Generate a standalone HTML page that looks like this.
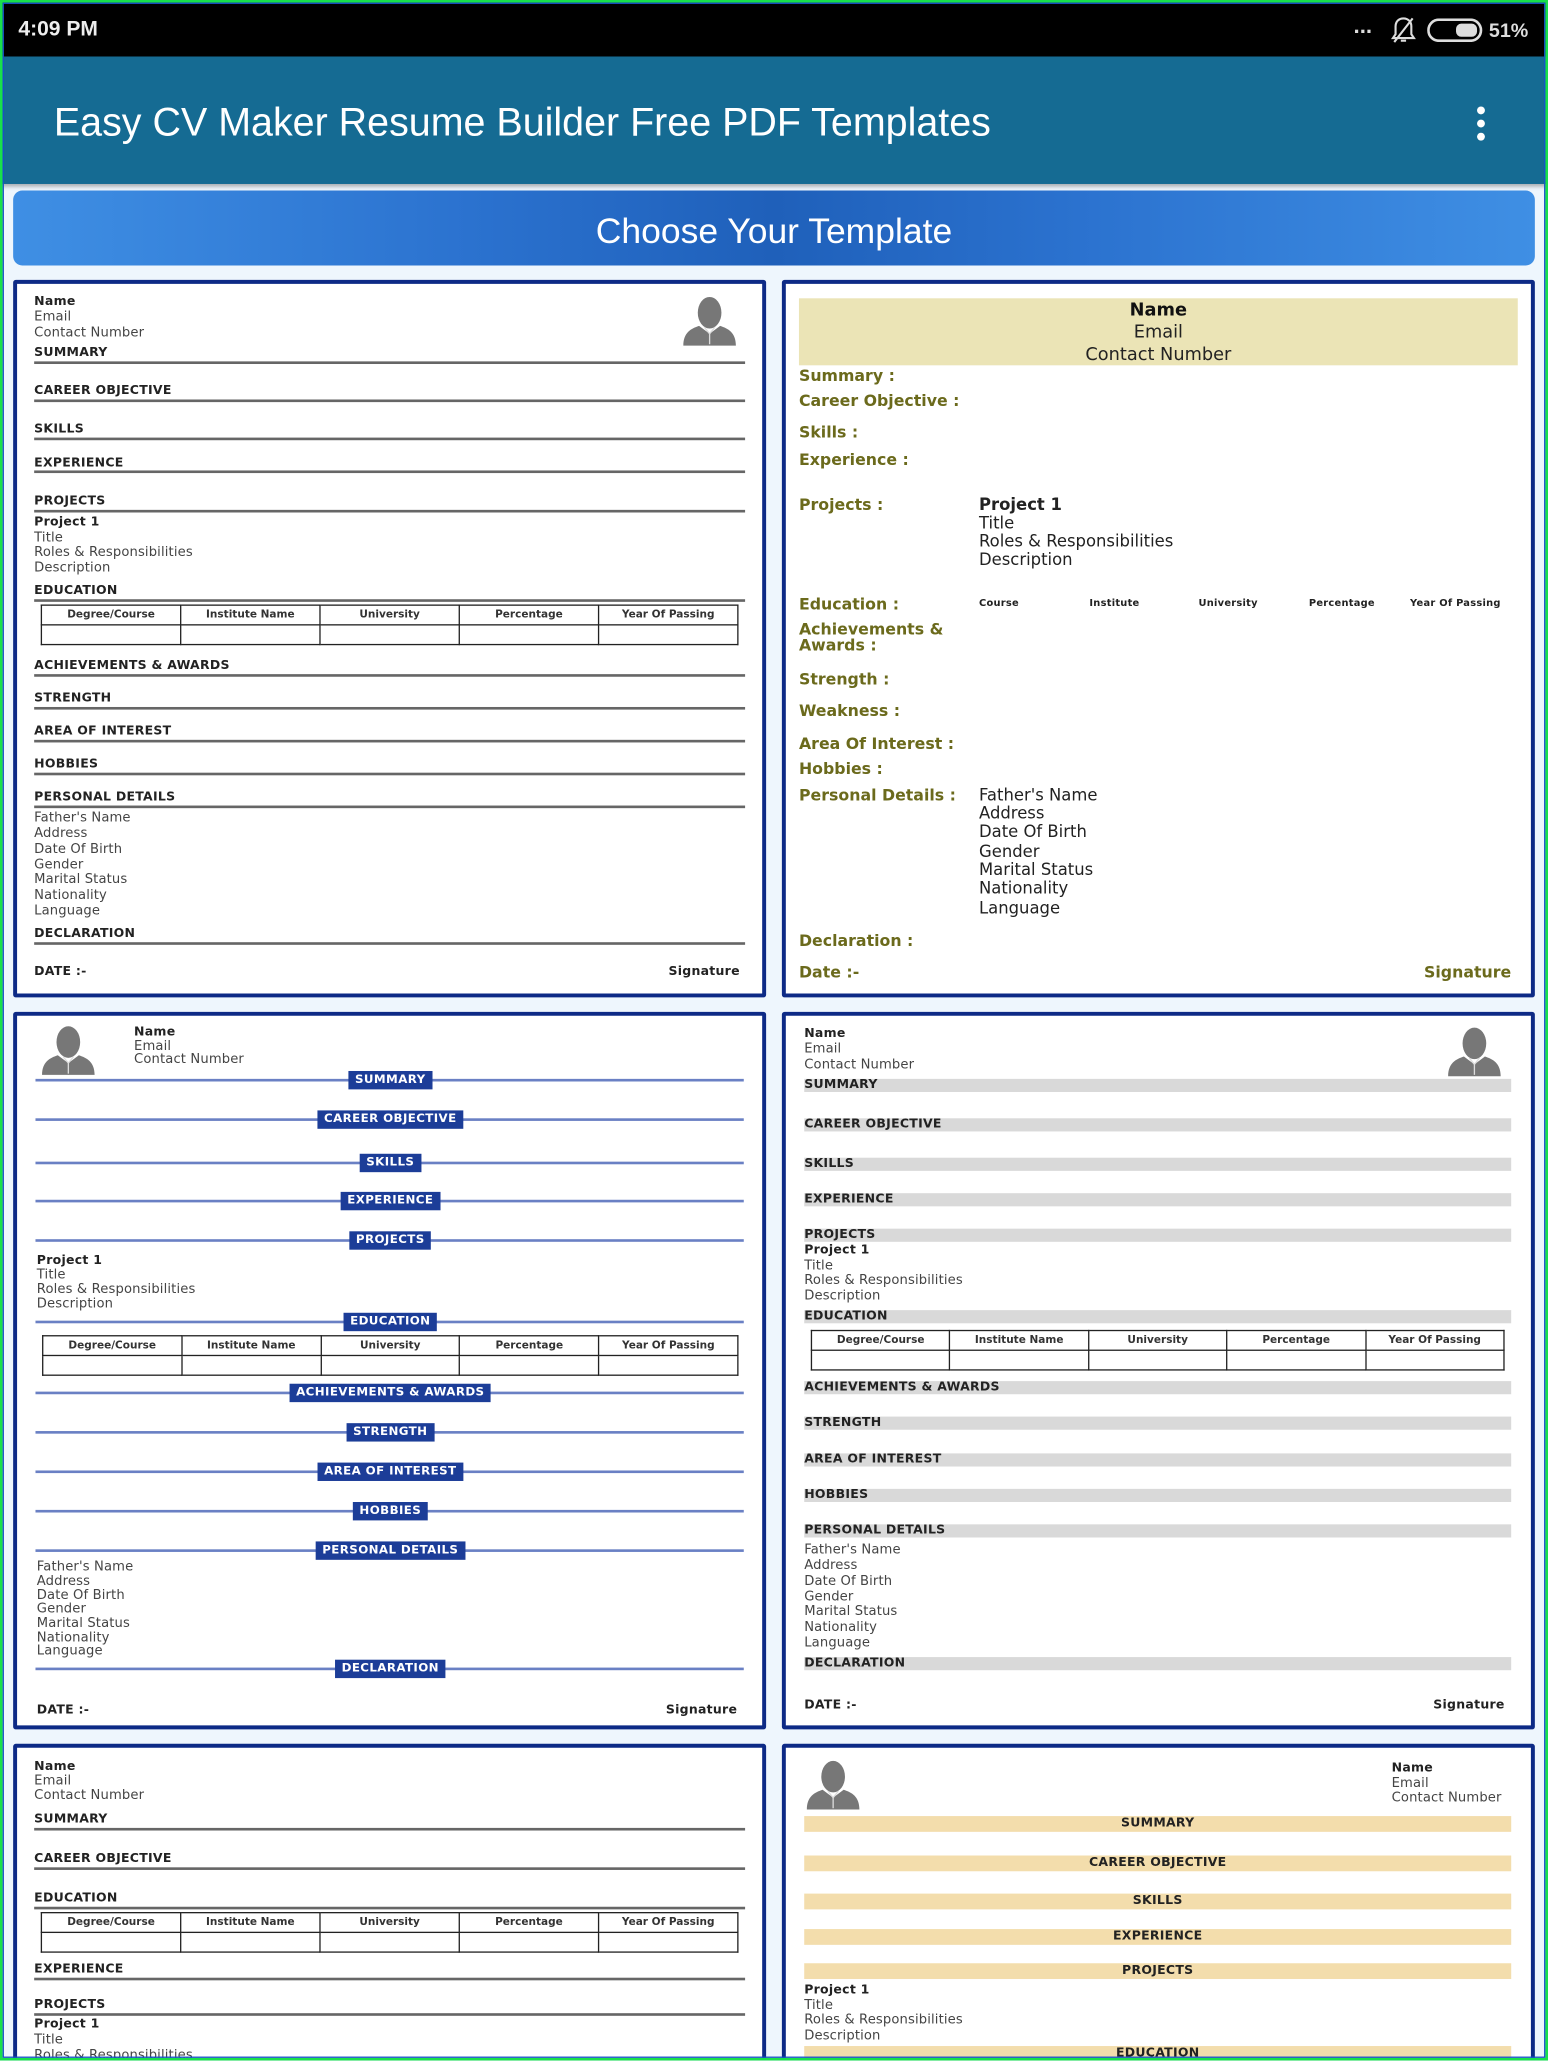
<!DOCTYPE html>
<html><head><meta charset="utf-8"><style>
*{margin:0;padding:0;box-sizing:border-box}
html,body{width:1548px;height:2060px;overflow:hidden;background:#eef6fd}
#w{position:absolute;left:0;top:0;width:1178px;height:1568px;transform:scale(1.31409);transform-origin:0 0;font-family:"Liberation Sans",Arial,sans-serif;background:#eef6fd;overflow:hidden}
.a{position:absolute;white-space:nowrap}
.r{transform:translateX(-100%)}
.card{position:absolute;background:#fff;border:3px solid #0d2a86;border-radius:2px;overflow:hidden}
.h{position:absolute;white-space:nowrap;font-family:"DejaVu Sans",sans-serif;font-weight:bold;font-size:9.5px;color:#222;letter-spacing:.2px;line-height:12px}
.n{position:absolute;white-space:nowrap;font-family:"DejaVu Sans",sans-serif;font-size:10px;color:#444;letter-spacing:.1px;line-height:12px}
.ln{position:absolute;height:1.5px;background:#666}
.bl{position:absolute;height:2px;background:#6a80c4}
.bx{position:absolute;transform:translateX(-50%);background:#1c3d98;color:#fff;font-family:"DejaVu Sans",sans-serif;font-weight:bold;font-size:9px;letter-spacing:.3px;padding:1px 5px;line-height:12px;white-space:nowrap}
.gb{position:absolute;height:10px;background:#d9d9d9}
.yb{position:absolute;height:12px;background:#f3ddac;text-align:center;font-family:"DejaVu Sans",sans-serif;font-weight:bold;font-size:9.5px;color:#222;line-height:12px;letter-spacing:.2px}
.ol{position:absolute;white-space:nowrap;font-family:"DejaVu Sans",sans-serif;font-weight:bold;font-size:12px;color:#6b6a1c;line-height:14px}
.bk{position:absolute;white-space:nowrap;font-family:"DejaVu Sans",sans-serif;font-size:12.5px;color:#222;line-height:14px}
table.tb{position:absolute;border-collapse:collapse;table-layout:fixed}
table.tb td{border:1.5px solid #222;font-family:"DejaVu Sans",sans-serif;font-weight:bold;font-size:8px;color:#333;text-align:center;height:15px;line-height:12px;white-space:nowrap;overflow:hidden}
</style></head><body><div id="w">
<!-- status bar -->
<div class="a" style="left:0;top:0;width:1178px;height:43px;background:#000"></div>
<div class="a" style="left:14px;top:14px;color:#eee;font-size:16px;font-weight:bold">4:09 PM</div>
<div class="a" style="left:1030px;top:10px;color:#ddd;font-size:17px;font-weight:bold">...</div>
<svg class="a" style="left:1058px;top:12px" width="20" height="22" viewBox="0 0 20 22"><path d="M10 2c-4 0-6 3-6 6v6l-2 3h16l-2-3V8c0-3-2-6-6-6zM8 19h4M3 20L17 2" stroke="#ddd" stroke-width="1.6" fill="none"/></svg>
<svg class="a" style="left:1086px;top:14px" width="44" height="18"><rect x="1" y="1" width="40" height="16" rx="8" fill="none" stroke="#ddd" stroke-width="2"/><rect x="22" y="4" width="16" height="10" rx="4" fill="#ddd"/></svg>
<div class="a" style="left:1133px;top:15px;color:#ddd;font-size:15px;font-weight:bold">51%</div>
<!-- app bar -->
<div class="a" style="left:0;top:43px;width:1178px;height:97px;background:#156b93;box-shadow:0 2px 3px rgba(0,0,0,.3)"></div>
<div class="a" style="left:41px;top:77px;color:#fff;font-size:30px">Easy CV Maker Resume Builder Free PDF Templates</div>
<div class="a" style="left:1124px;top:81px;width:6px;height:6px;border-radius:3px;background:#fff"></div>
<div class="a" style="left:1124px;top:91px;width:6px;height:6px;border-radius:3px;background:#fff"></div>
<div class="a" style="left:1124px;top:101px;width:6px;height:6px;border-radius:3px;background:#fff"></div>
<!-- button -->
<div class="a" style="left:10px;top:145px;width:1158px;height:57px;border-radius:7px;background:linear-gradient(90deg,#3f8fe4 0%,#2b72cf 30%,#1f60ba 50%,#2b72cf 70%,#3f8fe4 100%);color:#fff;font-size:27px;text-align:center;line-height:62px">Choose Your Template</div>

<svg width="0" height="0" style="position:absolute"><defs><g id="av"><ellipse cx="22" cy="13" rx="9" ry="12" fill="#777"/><path d="M2 38c0-10 6-13 12-15l8 6 8-6c6 2 12 5 12 15z" fill="#777"/><path d="M18 24l4 5 4-5M22 29v8" stroke="#ddd" stroke-width="1" fill="none"/></g></defs></svg>

<!-- CARD 1 -->
<div class="card" style="left:10px;top:213px;width:573px;height:546px">
<svg class="a" style="left:505px;top:9px" width="46" height="40"><use href="#av"/></svg>
<div style="position:absolute;left:-13px;top:-216px">
<div class="h" style="left:26px;top:224px">Name</div>
<div class="n" style="left:26px;top:236px">Email</div>
<div class="n" style="left:26px;top:248px">Contact Number</div>
<div class="h" style="left:26px;top:263px">SUMMARY</div><div class="ln" style="left:26px;width:541px;top:275px"></div>
<div class="h" style="left:26px;top:292px">CAREER OBJECTIVE</div><div class="ln" style="left:26px;width:541px;top:304px"></div>
<div class="h" style="left:26px;top:321px">SKILLS</div><div class="ln" style="left:26px;width:541px;top:333px"></div>
<div class="h" style="left:26px;top:347px">EXPERIENCE</div><div class="ln" style="left:26px;width:541px;top:358px"></div>
<div class="h" style="left:26px;top:376px">PROJECTS</div><div class="ln" style="left:26px;width:541px;top:388px"></div>
<div class="h" style="left:26px;top:392px">Project 1</div>
<div class="n" style="left:26px;top:404px">Title</div>
<div class="n" style="left:26px;top:415px">Roles &amp; Responsibilities</div>
<div class="n" style="left:26px;top:427px">Description</div>
<div class="h" style="left:26px;top:444px">EDUCATION</div><div class="ln" style="left:26px;width:541px;top:456px"></div>
<table class="tb" style="left:31px;top:460px;width:531px"><tr><td>Degree/Course</td><td>Institute Name</td><td>University</td><td>Percentage</td><td>Year Of Passing</td></tr><tr><td></td><td></td><td></td><td></td><td></td></tr></table>
<div class="h" style="left:26px;top:501px">ACHIEVEMENTS &amp; AWARDS</div><div class="ln" style="left:26px;width:541px;top:513px"></div>
<div class="h" style="left:26px;top:526px">STRENGTH</div><div class="ln" style="left:26px;width:541px;top:538px"></div>
<div class="h" style="left:26px;top:551px">AREA OF INTEREST</div><div class="ln" style="left:26px;width:541px;top:563px"></div>
<div class="h" style="left:26px;top:576px">HOBBIES</div><div class="ln" style="left:26px;width:541px;top:588px"></div>
<div class="h" style="left:26px;top:601px">PERSONAL DETAILS</div><div class="ln" style="left:26px;width:541px;top:613px"></div>
<div class="n" style="left:26px;top:617px">Father's Name</div>
<div class="n" style="left:26px;top:629px">Address</div>
<div class="n" style="left:26px;top:641px">Date Of Birth</div>
<div class="n" style="left:26px;top:653px">Gender</div>
<div class="n" style="left:26px;top:664px">Marital Status</div>
<div class="n" style="left:26px;top:676px">Nationality</div>
<div class="n" style="left:26px;top:688px">Language</div>
<div class="h" style="left:26px;top:705px">DECLARATION</div><div class="ln" style="left:26px;width:541px;top:717px"></div>
<div class="h" style="left:26px;top:734px">DATE :-</div>
<div class="h r" style="left:563px;top:734px">Signature</div>
</div></div>

<!-- CARD 2 -->
<div class="card" style="left:595px;top:213px;width:573px;height:546px">
<div style="position:absolute;left:-598px;top:-216px">
<div class="a" style="left:608px;top:227px;width:547px;height:51px;background:#ebe4b6"></div>
<div class="a" style="left:608px;top:228px;width:547px;text-align:center;font-family:'DejaVu Sans',sans-serif;font-size:13.5px;font-weight:bold;color:#111">Name</div>
<div class="a" style="left:608px;top:245px;width:547px;text-align:center;font-family:'DejaVu Sans',sans-serif;font-size:13.5px;color:#222">Email</div>
<div class="a" style="left:608px;top:262px;width:547px;text-align:center;font-family:'DejaVu Sans',sans-serif;font-size:13.5px;color:#222">Contact Number</div>
<div class="ol" style="left:608px;top:279px">Summary :</div>
<div class="ol" style="left:608px;top:298px">Career Objective :</div>
<div class="ol" style="left:608px;top:322px">Skills :</div>
<div class="ol" style="left:608px;top:343px">Experience :</div>
<div class="ol" style="left:608px;top:377px">Projects :</div>
<div class="bk" style="left:745px;top:377px;font-weight:bold">Project 1</div>
<div class="bk" style="left:745px;top:391px">Title</div>
<div class="bk" style="left:745px;top:405px">Roles &amp; Responsibilities</div>
<div class="bk" style="left:745px;top:419px">Description</div>
<div class="ol" style="left:608px;top:453px">Education :</div>
<div class="h" style="left:745px;top:453px;font-size:7.5px">Course</div>
<div class="h" style="left:829px;top:453px;font-size:7.5px">Institute</div>
<div class="h" style="left:912px;top:453px;font-size:7.5px">University</div>
<div class="h" style="left:996px;top:453px;font-size:7.5px">Percentage</div>
<div class="h" style="left:1073px;top:453px;font-size:7.5px">Year Of Passing</div>
<div class="ol" style="left:608px;top:473px;line-height:12px">Achievements &amp;<br>Awards :</div>
<div class="ol" style="left:608px;top:510px">Strength :</div>
<div class="ol" style="left:608px;top:534px">Weakness :</div>
<div class="ol" style="left:608px;top:559px">Area Of Interest :</div>
<div class="ol" style="left:608px;top:578px">Hobbies :</div>
<div class="ol" style="left:608px;top:598px">Personal Details :</div>
<div class="bk" style="left:745px;top:598px">Father's Name</div>
<div class="bk" style="left:745px;top:612px">Address</div>
<div class="bk" style="left:745px;top:626px">Date Of Birth</div>
<div class="bk" style="left:745px;top:641px">Gender</div>
<div class="bk" style="left:745px;top:655px">Marital Status</div>
<div class="bk" style="left:745px;top:669px">Nationality</div>
<div class="bk" style="left:745px;top:684px">Language</div>
<div class="ol" style="left:608px;top:709px">Declaration :</div>
<div class="ol" style="left:608px;top:733px">Date :-</div>
<div class="ol r" style="left:1150px;top:733px">Signature</div>
</div></div>

<!-- CARD 3 -->
<div class="card" style="left:10px;top:770px;width:573px;height:546px">
<svg class="a" style="left:17px;top:7px" width="46" height="40"><use href="#av"/></svg>
<div style="position:absolute;left:-13px;top:-773px">
<div class="h" style="left:102px;top:780px">Name</div>
<div class="n" style="left:102px;top:791px">Email</div>
<div class="n" style="left:102px;top:801px">Contact Number</div>
<div class="bl" style="left:27px;width:539px;top:821px"></div><div class="bx" style="left:297px;top:815px">SUMMARY</div>
<div class="bl" style="left:27px;width:539px;top:851px"></div><div class="bx" style="left:297px;top:845px">CAREER OBJECTIVE</div>
<div class="bl" style="left:27px;width:539px;top:884px"></div><div class="bx" style="left:297px;top:878px">SKILLS</div>
<div class="bl" style="left:27px;width:539px;top:913px"></div><div class="bx" style="left:297px;top:907px">EXPERIENCE</div>
<div class="bl" style="left:27px;width:539px;top:943px"></div><div class="bx" style="left:297px;top:937px">PROJECTS</div>
<div class="h" style="left:28px;top:954px">Project 1</div>
<div class="n" style="left:28px;top:965px">Title</div>
<div class="n" style="left:28px;top:976px">Roles &amp; Responsibilities</div>
<div class="n" style="left:28px;top:987px">Description</div>
<div class="bl" style="left:27px;width:539px;top:1005px"></div><div class="bx" style="left:297px;top:999px">EDUCATION</div>
<table class="tb" style="left:32px;top:1016px;width:530px"><tr><td>Degree/Course</td><td>Institute Name</td><td>University</td><td>Percentage</td><td>Year Of Passing</td></tr><tr><td></td><td></td><td></td><td></td><td></td></tr></table>
<div class="bl" style="left:27px;width:539px;top:1059px"></div><div class="bx" style="left:297px;top:1053px">ACHIEVEMENTS &amp; AWARDS</div>
<div class="bl" style="left:27px;width:539px;top:1089px"></div><div class="bx" style="left:297px;top:1083px">STRENGTH</div>
<div class="bl" style="left:27px;width:539px;top:1119px"></div><div class="bx" style="left:297px;top:1113px">AREA OF INTEREST</div>
<div class="bl" style="left:27px;width:539px;top:1149px"></div><div class="bx" style="left:297px;top:1143px">HOBBIES</div>
<div class="bl" style="left:27px;width:539px;top:1179px"></div><div class="bx" style="left:297px;top:1173px">PERSONAL DETAILS</div>
<div class="n" style="left:28px;top:1187px">Father's Name</div>
<div class="n" style="left:28px;top:1198px">Address</div>
<div class="n" style="left:28px;top:1209px">Date Of Birth</div>
<div class="n" style="left:28px;top:1219px">Gender</div>
<div class="n" style="left:28px;top:1230px">Marital Status</div>
<div class="n" style="left:28px;top:1241px">Nationality</div>
<div class="n" style="left:28px;top:1251px">Language</div>
<div class="bl" style="left:27px;width:539px;top:1269px"></div><div class="bx" style="left:297px;top:1263px">DECLARATION</div>
<div class="h" style="left:28px;top:1296px">DATE :-</div>
<div class="h r" style="left:561px;top:1296px">Signature</div>
</div></div>

<!-- CARD 4 -->
<div class="card" style="left:595px;top:770px;width:573px;height:546px">
<svg class="a" style="left:502px;top:8px" width="46" height="40"><use href="#av"/></svg>
<div style="position:absolute;left:-598px;top:-773px">
<div class="h" style="left:612px;top:781px">Name</div>
<div class="n" style="left:612px;top:793px">Email</div>
<div class="n" style="left:612px;top:805px">Contact Number</div>
<div class="gb" style="left:612px;width:538px;top:821px"></div><div class="h" style="left:612px;top:820px">SUMMARY</div>
<div class="gb" style="left:612px;width:538px;top:851px"></div><div class="h" style="left:612px;top:850px">CAREER OBJECTIVE</div>
<div class="gb" style="left:612px;width:538px;top:881px"></div><div class="h" style="left:612px;top:880px">SKILLS</div>
<div class="gb" style="left:612px;width:538px;top:908px"></div><div class="h" style="left:612px;top:907px">EXPERIENCE</div>
<div class="gb" style="left:612px;width:538px;top:935px"></div><div class="h" style="left:612px;top:934px">PROJECTS</div>
<div class="h" style="left:612px;top:946px">Project 1</div>
<div class="n" style="left:612px;top:958px">Title</div>
<div class="n" style="left:612px;top:969px">Roles &amp; Responsibilities</div>
<div class="n" style="left:612px;top:981px">Description</div>
<div class="gb" style="left:612px;width:538px;top:997px"></div><div class="h" style="left:612px;top:996px">EDUCATION</div>
<table class="tb" style="left:617px;top:1012px;width:528px"><tr><td>Degree/Course</td><td>Institute Name</td><td>University</td><td>Percentage</td><td>Year Of Passing</td></tr><tr><td></td><td></td><td></td><td></td><td></td></tr></table>
<div class="gb" style="left:612px;width:538px;top:1051px"></div><div class="h" style="left:612px;top:1050px">ACHIEVEMENTS &amp; AWARDS</div>
<div class="gb" style="left:612px;width:538px;top:1078px"></div><div class="h" style="left:612px;top:1077px">STRENGTH</div>
<div class="gb" style="left:612px;width:538px;top:1106px"></div><div class="h" style="left:612px;top:1105px">AREA OF INTEREST</div>
<div class="gb" style="left:612px;width:538px;top:1133px"></div><div class="h" style="left:612px;top:1132px">HOBBIES</div>
<div class="gb" style="left:612px;width:538px;top:1160px"></div><div class="h" style="left:612px;top:1159px">PERSONAL DETAILS</div>
<div class="n" style="left:612px;top:1174px">Father's Name</div>
<div class="n" style="left:612px;top:1186px">Address</div>
<div class="n" style="left:612px;top:1198px">Date Of Birth</div>
<div class="n" style="left:612px;top:1210px">Gender</div>
<div class="n" style="left:612px;top:1221px">Marital Status</div>
<div class="n" style="left:612px;top:1233px">Nationality</div>
<div class="n" style="left:612px;top:1245px">Language</div>
<div class="gb" style="left:612px;width:538px;top:1261px"></div><div class="h" style="left:612px;top:1260px">DECLARATION</div>
<div class="h" style="left:612px;top:1292px">DATE :-</div>
<div class="h r" style="left:1145px;top:1292px">Signature</div>
</div></div>

<!-- CARD 5 -->
<div class="card" style="left:10px;top:1327px;width:573px;height:260px">
<div style="position:absolute;left:-13px;top:-1330px">
<div class="h" style="left:26px;top:1339px">Name</div>
<div class="n" style="left:26px;top:1350px">Email</div>
<div class="n" style="left:26px;top:1361px">Contact Number</div>
<div class="h" style="left:26px;top:1379px">SUMMARY</div><div class="ln" style="left:26px;width:541px;top:1391px"></div>
<div class="h" style="left:26px;top:1409px">CAREER OBJECTIVE</div><div class="ln" style="left:26px;width:541px;top:1421px"></div>
<div class="h" style="left:26px;top:1439px">EDUCATION</div><div class="ln" style="left:26px;width:541px;top:1451px"></div>
<table class="tb" style="left:31px;top:1455px;width:531px"><tr><td>Degree/Course</td><td>Institute Name</td><td>University</td><td>Percentage</td><td>Year Of Passing</td></tr><tr><td></td><td></td><td></td><td></td><td></td></tr></table>
<div class="h" style="left:26px;top:1493px">EXPERIENCE</div><div class="ln" style="left:26px;width:541px;top:1505px"></div>
<div class="h" style="left:26px;top:1520px">PROJECTS</div><div class="ln" style="left:26px;width:541px;top:1532px"></div>
<div class="h" style="left:26px;top:1535px">Project 1</div>
<div class="n" style="left:26px;top:1547px">Title</div>
<div class="n" style="left:26px;top:1559px">Roles &amp; Responsibilities</div>
</div></div>

<!-- CARD 6 -->
<div class="card" style="left:595px;top:1327px;width:573px;height:260px">
<svg class="a" style="left:14px;top:9px" width="46" height="40"><use href="#av"/></svg>
<div style="position:absolute;left:-598px;top:-1330px">
<div class="h" style="left:1059px;top:1340px">Name</div>
<div class="n" style="left:1059px;top:1352px">Email</div>
<div class="n" style="left:1059px;top:1363px">Contact Number</div>
<div class="yb" style="left:612px;width:538px;top:1382px">SUMMARY</div>
<div class="yb" style="left:612px;width:538px;top:1412px">CAREER OBJECTIVE</div>
<div class="yb" style="left:612px;width:538px;top:1441px">SKILLS</div>
<div class="yb" style="left:612px;width:538px;top:1468px">EXPERIENCE</div>
<div class="yb" style="left:612px;width:538px;top:1494px">PROJECTS</div>
<div class="h" style="left:612px;top:1509px">Project 1</div>
<div class="n" style="left:612px;top:1521px">Title</div>
<div class="n" style="left:612px;top:1532px">Roles &amp; Responsibilities</div>
<div class="n" style="left:612px;top:1544px">Description</div>
<div class="yb" style="left:612px;width:538px;top:1557px">EDUCATION</div>
</div></div>

<!-- frame -->
<div class="a" style="left:0;top:0;width:1178px;height:1568px;border:2px solid #19e04a;pointer-events:none"></div>
<div class="a" style="left:2px;top:2px;width:1174px;height:1564px;border:1.5px solid #1a50c8;pointer-events:none"></div>
</div></body></html>
